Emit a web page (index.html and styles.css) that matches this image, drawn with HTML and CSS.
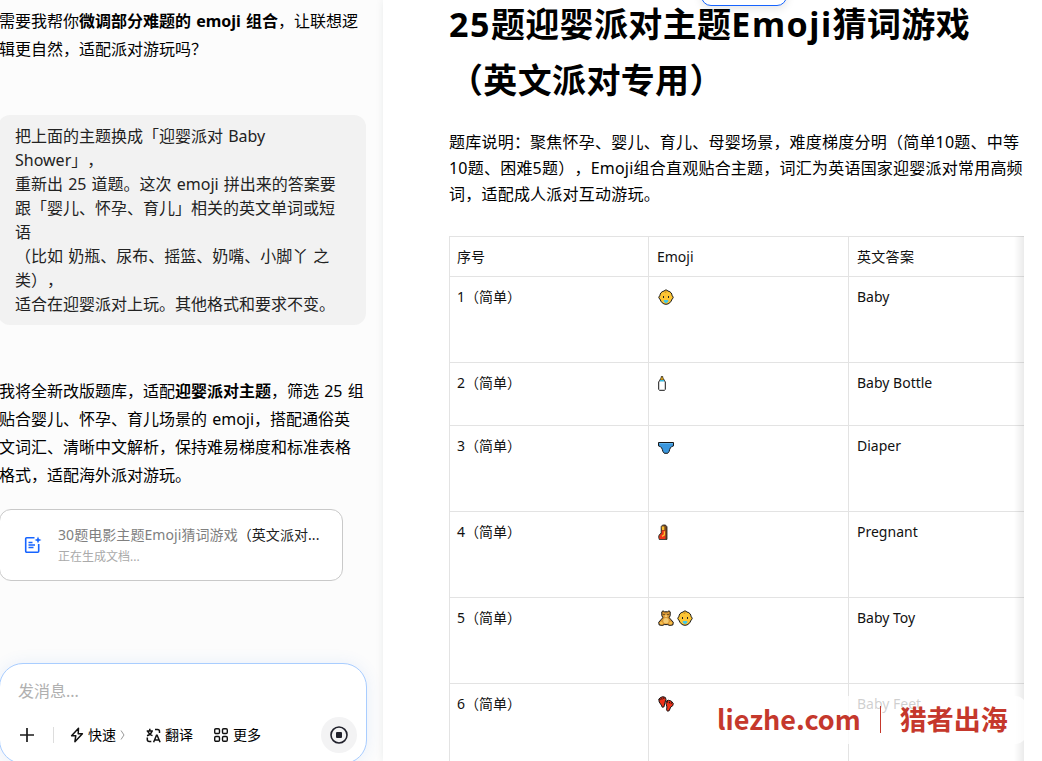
FILE: index.html
```html
<!DOCTYPE html>
<html lang="zh-CN">
<head>
  <meta charset="UTF-8">
  <title>Emoji猜词游戏</title>
  <link rel="stylesheet" href="styles.css">
</head>
<body>
  <!-- 图标 -->
  <svg class="sprite" width="0" height="0">
    <symbol id="baby" viewBox="0 0 16 16">
      <path d="M6 2 8 .8 10 2c3 .8 4 2.600 4 4.700 1.600.5 1.600 2.800 0 3.400C13.200 13 11 15.300 8 15.300S2.800 13 2 10.100C.4 9.500.4 7.200 2 6.700 2 4.600 3 2.800 6 2Z" fill="#fdc534" stroke="#171717"/>
      <path d="M8 1.500v2L6.500 3" stroke="#c8871b" stroke-width=".8" fill="none"/>
      <path d="M5 7h1v2H5Zm5 0h1v2h-1Z" fill="#222"/>
      <path d="M6 11h4l.4 1.400L8.500 14h-1l-1.900-1.600Z" fill="#43c9e8"/>
    </symbol>
    <symbol id="bottle" viewBox="0 0 8 16">
      <path d="M2 5c0-1 1.300-1.300 1.300-3.500h1.400C4.700 3.700 6 4 6 5" fill="#f9b719" stroke="#171717" stroke-width=".8"/>
      <path d="M1.800 5.200h4.400L7.300 7v7.500l-.9.800H1.600l-.9-.8V7Z" fill="#fff" stroke="#171717"/>
      <path d="M2 5h4v1.500H2Z" fill="#37b9dd"/>
    </symbol>
    <symbol id="brief" viewBox="0 0 16 12">
      <path d="M.5.5h15v3.400c-2.800.4-3.900 3-4.300 5.400L9.700 11.300H6.300L4.800 9.300C4.400 6.900 3.300 4.300.5 3.900Z" fill="#3a96dd" stroke="#171717"/>
      <path d="M1 1.500h14" stroke="#5fb0e8"/>
    </symbol>
    <symbol id="pregnant" viewBox="0 0 10 16">
      <path d="M3.200 3C3 .7 8.400-.2 9 3v12.400H1.200L.7 13c0-2 1-3 2.500-4Z" fill="#7a4a22" stroke="#171717" stroke-width=".8"/>
      <path d="M3.700 2.500h2.600V6H4Z" fill="#fbc132"/>
      <path d="M3.800 6.500h3.500V15H1.500c-.8-3 .3-4.600 2.300-5.200Z" fill="#ee331c"/>
      <path d="M6.400 7.200v3.700L4 12.400" stroke="#fbc132" stroke-width="1.300" fill="none"/>
    </symbol>
    <symbol id="bear" viewBox="0 0 16 16">
      <path d="M3.800 1.800 5 .8l1.500 1h3l1.500-1 1.200 1v3.700l-1 2.200 1.900 2.100 2.200 2.500-.5 2.700-3.500.4-1.500-.8H6.200l-1.500.8L1.200 15 .7 12.300l2.200-2.500 1.900-2.100-1-2.200Z" fill="#d99735" stroke="#171717"/>
      <circle cx="8" cy="10.700" r="2.700" fill="#f4cc75"/><circle cx="3.300" cy="13.200" r="1.400" fill="#f8c04a"/><circle cx="12.700" cy="13.200" r="1.400" fill="#f8c04a"/>
      <path d="M6.800 5.200h2.400V7H6.800Z" fill="#f4cc75"/><path d="M5.500 4h1v1h-1Zm4 0h1v1h-1Z" fill="#171717"/>
    </symbol>
    <symbol id="feet" viewBox="0 0 16 16">
      <path d="M.8 3 3 1.300 5 .7l2.300.7.7 2-1 3L5.900 11l-1.700.2-.9-2.100L1.200 6Z" fill="#ef3018" stroke="#171717"/>
      <path d="m8.300 5 2-.8 3 .9 2 2.400-.6 2.300-2 1.300-1.500 3.600-1.700.5-.9-1.300.3-3-1-3.700Z" fill="#ef3018" stroke="#171717"/>
      <path d="m1.500 3.600 5-1.600M9 5.800l5 1.600" stroke="#171717" stroke-width="1.500" stroke-dasharray="1 1"/>
    </symbol>
  </svg>

  <div class="app">
    <!-- 左侧对话 -->
    <section class="chat">
      <p class="reply">需要我帮你<b>微调部分难题的 emoji 组合</b>，让联想逻<br>辑更自然，适配派对游玩吗？</p>

      <div class="question">把上面的主题换成「迎婴派对 Baby<br>Shower」，<br>重新出 25 道题。这次 emoji 拼出来的答案要<br>跟「婴儿、怀孕、育儿」相关的英文单词或短<br>语<br>（比如 奶瓶、尿布、摇篮、奶嘴、小脚丫 之<br>类），<br>适合在迎婴派对上玩。其他格式和要求不变。</div>

      <p class="reply">我将全新改版题库，适配<b>迎婴派对主题</b>，筛选 25 组<br>贴合婴儿、怀孕、育儿场景的 emoji，搭配通俗英<br>文词汇、清晰中文解析，保持难易梯度和标准表格<br>格式，适配海外派对游玩。</p>

      <div class="doc-card">
        <svg class="doc-icon" width="18" height="18" viewBox="0 0 18 18" fill="none" stroke="#1664ff" stroke-width="1.600">
          <path d="M10.500 1.800H2.700a1 1 0 0 0-1 1v12.400a1 1 0 0 0 1 1h11a1 1 0 0 0 1-1V8"/>
          <path d="M4.500 6.500h4M4.500 9h6.500M4.500 11.500h5" stroke-width="1.300"/>
          <path d="m14 .5 1 2.500 2.500 1-2.500 1-1 2.500L13 5l-2.500-1L13 3Z" fill="#1664ff" stroke="none"/>
        </svg>
        <div>
          <div class="doc-name">30题电影主题Emoji猜词游戏<span>（英文派对...</span></div>
          <div class="doc-state">正在生成文档...</div>
        </div>
      </div>

      <div class="composer">
        <div class="placeholder">发消息...</div>
        <div class="tools">
          <svg class="plus" width="16" height="16" viewBox="0 0 16 16" stroke="#1c1c1c" stroke-width="1.700"><path d="M8 1v14M1 8h14"/></svg>
          <i class="sep"></i>
          <div class="tool fast">
            <svg width="14" height="16" viewBox="0 0 14 16" fill="none" stroke="#111" stroke-width="1.500" stroke-linejoin="round"><path d="M8.500 1.300 1.600 8.700h4.200L4.900 14.700l7.500-8H8.200Z"/></svg>
            <span>快速</span>
            <svg class="arrow" width="5" height="10" viewBox="0 0 5 10" fill="none" stroke="#999"><path d="m1 .5 3 4.500-3 4.500"/></svg>
          </div>
          <div class="tool translate">
            <svg width="15" height="15" viewBox="0 0 15 15" fill="none" stroke="#111" stroke-width="1.500"><path d="M.7 3h6.200M3.800.8V3M6 3C5.400 5.400 3.500 7 1 7.700M1.800 3.500C2.700 5.700 4.400 7 6.500 7.600M9 1.500h2.500a2 2 0 0 1 2 2V5M1.300 9.500v2a2 2 0 0 0 2 2h2M7.600 14.200l2.900-7h.6l3 7M8.600 12h4.500"/></svg>
            <span>翻译</span>
          </div>
          <div class="tool more">
            <svg width="14" height="14" viewBox="0 0 14 14" fill="none" stroke="#111" stroke-width="1.400"><rect x=".7" y=".7" width="4.800" height="4.800" rx="1.200"/><rect x="8.500" y=".7" width="4.800" height="4.800" rx="1.200"/><rect x=".7" y="8.500" width="4.800" height="4.800" rx="1.200"/><rect x="8.500" y="8.500" width="4.800" height="4.800" rx="1.200"/></svg>
            <span>更多</span>
          </div>
          <div class="stop">
            <svg width="18" height="18" viewBox="0 0 18 18"><circle cx="9" cy="9" r="8" fill="none" stroke="#20212b" stroke-width="1.600"/><rect x="6" y="6" width="6" height="6" rx="1" fill="#20212b"/></svg>
          </div>
        </div>
      </div>
    </section>

    <!-- 右侧文档 -->
    <main class="doc">
      <div class="float-btn"></div>
      <h1><span>25</span>题迎婴派对主题<span>Emoji</span>猜词游戏<br>（英文派对专用）</h1>
      <p class="intro">题库说明：聚焦怀孕、婴儿、育儿、母婴场景，难度梯度分明（简单10题、中等<br>10题、困难5题），Emoji组合直观贴合主题，词汇为英语国家迎婴派对常用高频<br>词，适配成人派对互动游玩。</p>

      <div class="table-wrap">
        <table>
          <tr class="head"><td>序号</td><td>Emoji</td><td>英文答案</td></tr>
          <tr><td>1（简单）</td><td><svg class="emo"><use href="#baby"/></svg></td><td>Baby</td></tr>
          <tr class="short"><td>2（简单）</td><td><svg class="emo emo-bottle"><use href="#bottle"/></svg></td><td>Baby Bottle</td></tr>
          <tr><td>3（简单）</td><td><svg class="emo emo-brief"><use href="#brief"/></svg></td><td>Diaper</td></tr>
          <tr><td>4（简单）</td><td><svg class="emo emo-pregnant"><use href="#pregnant"/></svg></td><td>Pregnant</td></tr>
          <tr><td>5（简单）</td><td><svg class="emo"><use href="#bear"/></svg><svg class="emo second"><use href="#baby"/></svg></td><td>Baby Toy</td></tr>
          <tr><td>6（简单）</td><td><svg class="emo"><use href="#feet"/></svg></td><td>Baby Feet</td></tr>
        </table>
      </div>

      <div class="watermark"><span class="site">liezhe.com</span><i></i><span class="brand">猎者出海</span></div>
    </main>
  </div>
</body>
</html>
```
FILE: styles.css
```css
* {
  margin: 0;
  padding: 0;
  box-sizing: border-box;
}

body {
  font-family: "Noto Sans", "Noto Sans CJK SC", sans-serif;
  font-size: 16px;
  color: #000;
  background: #fff;
  overflow: hidden;
  white-space: nowrap;
  text-spacing-trim: space-all;
}

svg {
  flex: none;
}

.sprite {
  position: absolute;
}

.app {
  display: flex;
  height: 761px;
}

/* 对话区 */
.chat {
  width: 383px;
  flex: none;
  padding-top: 7px;
  background: #fcfcfc;
  overflow: hidden;
}

.reply {
  margin-left: -1px;
  line-height: 28px;
  word-spacing: 1px;
}

.question {
  width: 368px;
  height: 210px;
  margin: 52px 0 52px -2px;
  padding: 9px 17px;
  border-radius: 12px;
  background: #f2f2f2;
  color: #222;
  line-height: 24px;
  word-spacing: 1px;
}

/* 文档卡片 */
.doc-card {
  display: flex;
  align-items: center;
  width: 344px;
  height: 72px;
  margin: 20px 0 82px -1px;
  padding-left: 24px;
  gap: 16px;
  border: 1px solid #c9c9c9;
  border-radius: 12px;
  background: #fff;
}

.doc-name {
  font-size: 14px;
  line-height: 22px;
  letter-spacing: .07px;
  color: #808080;
}

.doc-name span {
  color: #222;
}

.doc-state {
  font-size: 12px;
  line-height: 21px;
  color: #aaa;
}

/* 输入框 */
.composer {
  width: 368px;
  height: 101px;
  margin-left: -1px;
  border: 1px solid #a9cdff;
  border-radius: 24px;
  background: #fff;
  box-shadow: 0 0 16px rgba(60, 130, 240, .1);
}

.placeholder {
  padding: 15px 0 0 18px;
  line-height: 24px;
  color: #b0b0b0;
}

.tools {
  display: flex;
  align-items: center;
  height: 36px;
  margin-top: 14px;
  padding: 0 9px 0 19px;
  font-size: 14px;
}

.tool span {
  margin-top: -2px;
}

.sep {
  width: 1px;
  height: 16px;
  margin: 0 16px 0 18px;
  background: #ddd;
}

.tool {
  display: flex;
  align-items: center;
  gap: 5px;
}

.fast {
  gap: 4px;
}

.translate {
  margin-left: 21px;
  gap: 4px;
}

.more {
  margin-left: 21px;
}

.stop {
  display: flex;
  align-items: center;
  justify-content: center;
  width: 36px;
  height: 36px;
  margin-left: auto;
  border-radius: 50%;
  background: #f3f3f4;
}

/* 文档区 */
.doc {
  position: relative;
  flex: 1;
  padding-left: 66px;
  background: #fff;
  box-shadow: 0 0 8px rgba(20, 50, 50, .08);
}

.float-btn {
  position: absolute;
  top: -30px;
  left: 318px;
  width: 86px;
  height: 36px;
  border: 1px solid #1664ff;
  border-radius: 10px;
  background: #fff;
  box-shadow: 0 3px 8px rgba(0, 0, 0, .1);
}

h1 {
  position: relative;
  height: 112px;
  margin-top: -4px;
  font-size: 34px;
  line-height: 56px;
  letter-spacing: .35px;
}

h1 span {
  letter-spacing: 1.5px;
}

.intro {
  margin-top: 21px;
  line-height: 26px;
  letter-spacing: .22px;
}

/* 表格 */
.table-wrap {
  position: relative;
  width: 575px;
  height: 525px;
  margin-top: 29px;
  overflow: hidden;
}

.table-wrap::after {
  content: "";
  position: absolute;
  top: 0;
  right: 0;
  width: 10px;
  height: 100%;
  background: linear-gradient(to right, transparent, rgba(0, 0, 0, .08));
}

table {
  width: 600px;
  table-layout: fixed;
  border-collapse: collapse;
  font-size: 14px;
  line-height: 24px;
  color: #111;
}

td {
  height: 86px;
  padding: 8px 7px 0;
  border: 1px solid #e3e3e3;
  vertical-align: top;
}

td:first-child {
  width: 199px;
}

td:nth-child(2) {
  width: 200px;
  padding-left: 8px;
}

td:last-child {
  padding-left: 8px;
}

.head td {
  height: 40px;
}

.head td:last-child {
  letter-spacing: .3px;
}

.short td {
  height: 63px;
}

.emo {
  display: inline-block;
  width: 16px;
  height: 16px;
  margin: 4px 0 0 1px;
  vertical-align: top;
}

.second {
  margin-left: 3px;
}

.emo-bottle {
  width: 8px;
}

.emo-brief {
  height: 12px;
  margin-top: 8px;
}

.emo-pregnant {
  width: 10px;
}

/* 水印 */
.watermark {
  position: absolute;
  top: 696px;
  left: 320px;
  display: flex;
  align-items: center;
  width: 323px;
  height: 48px;
  padding: 0 0 3px 14px;
  border-radius: 10px;
  background: rgba(255, 255, 255, .8);
  color: #c5382c;
  font: bold 27px "Noto Sans CJK SC", sans-serif;
}

.watermark i {
  width: 1px;
  height: 27px;
  margin: 2px 19px 0;
  background: #c5382c;
}
```
